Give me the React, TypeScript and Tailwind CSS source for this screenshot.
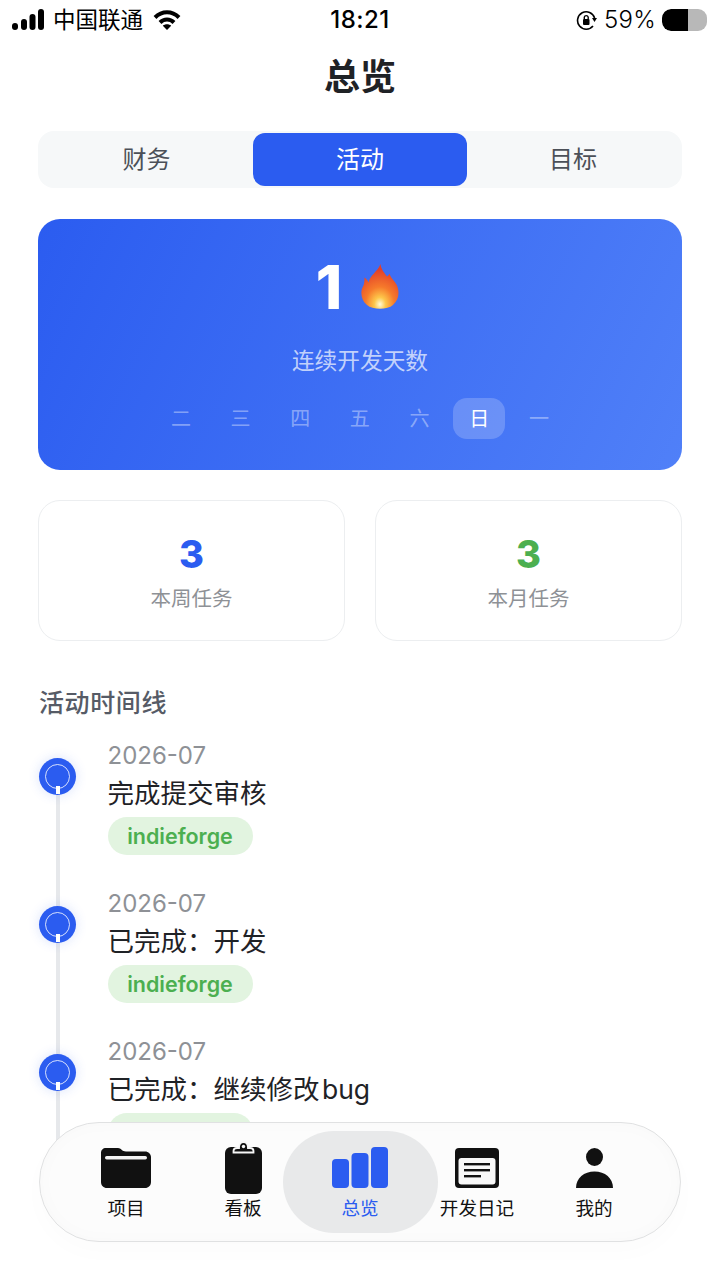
const cjk = "font-['Inter','Noto_Sans_CJK_SC',sans-serif]";

const weekDays = ['二', '三', '四', '五', '六', '日', '一'];

const timeline = [
  { date: '2026-07', title: '完成提交审核' },
  { date: '2026-07', title: '已完成：开发' },
  { date: '2026-07', title: '已完成：继续修改\u200abug' },
];

function StatusBar() {
  return (
    <div className="relative flex h-10 items-center justify-between pl-3 pr-[13px] text-black">
      <div className="flex items-center">
        <svg width="32" height="22" viewBox="0 0 32 22" fill="currentColor">
          <rect x="0" y="14" width="6" height="7" rx="3" />
          <rect x="9" y="10" width="6" height="11" rx="3" />
          <rect x="17.5" y="5" width="6" height="16" rx="3" />
          <rect x="26" y="0" width="6" height="21" rx="3" />
        </svg>
        <span className="ml-[9px] text-[22.5px] leading-none">中国联通</span>
        <svg className="ml-[10px]" width="28" height="22" viewBox="0 0 28 22" fill="none" stroke="currentColor" strokeWidth="4">
          <path d="M2 8.5 C9 1.5 19 1.5 26 8.5" />
          <path d="M7 13.5 C11 9.5 17 9.5 21 13.5" />
          <path d="M14 21 L9.8 16.7 C12 14.7 16 14.7 18.2 16.7 Z" fill="currentColor" stroke="none" />
        </svg>
      </div>
      <span className="absolute left-0 right-0 text-center text-2xl font-medium leading-none tracking-[0.5px]">18:21</span>
      <div className="flex items-center">
        <svg width="21" height="21" viewBox="0 0 21 21" fill="none" stroke="currentColor">
          <path d="M17 16 A8.7 8.7 0 1 1 18.6 8" strokeWidth="1.6" />
          <path d="M16 8 L21 8 L18.5 12 Z" fill="currentColor" stroke="none" />
          <rect x="7" y="9" width="6.5" height="6" rx="1" fill="currentColor" stroke="none" />
          <path d="M8.3 9 V7.2 A2 2 0 0 1 12.2 7.2 V9" strokeWidth="1.4" />
        </svg>
        <span className="ml-[7px] text-2xl font-light leading-none tracking-[0.3px]">59%</span>
        <div className="ml-[6px] flex h-[22px] w-[45px] overflow-hidden rounded-[9px] bg-[#b8b8b8]">
          <div className="w-[26px] rounded-l-[9px] bg-black" />
        </div>
      </div>
    </div>
  );
}

function Tabs() {
  return (
    <div className="mx-[38px] mt-[34px] flex h-[57px] items-center rounded-2xl bg-[#f6f8f9] text-2xl text-[#4b5058]">
      <div className="w-[215px] pl-[2px] text-center">财务</div>
      <div className="flex h-[53px] w-[214px] items-center justify-center rounded-xl bg-[#2b5cf0] text-white">活动</div>
      <div className="w-[215px] pr-[3px] text-center">目标</div>
    </div>
  );
}

function Flame() {
  return (
    <svg width="38" height="46" viewBox="0 0 38 46">
      <defs>
        <radialGradient id="flame" cx="50%" cy="90%" r="78%">
          <stop offset="0%" stopColor="#fffbd6" />
          <stop offset="20%" stopColor="#fdc64a" />
          <stop offset="50%" stopColor="#f67a2b" />
          <stop offset="100%" stopColor="#e23f2a" />
        </radialGradient>
      </defs>
      <path
        d="M19.5 0 C20 5 23 8.5 26 12.5 C27.5 11.5 28 10.5 28.5 9.5 C29.5 14 33 16 35.5 20.5 C39 27.5 38 36 32 41 C26.5 46 11.5 46 6 41 C0 36 -1 27.5 2 22.5 C3 20.5 3.5 18 3.5 13.5 C5 14.5 6.5 16 7.5 18.5 C9 11 16 8.5 19.5 0 Z"
        fill="url(#flame)"
      />
    </svg>
  );
}

function Hero() {
  return (
    <div className="mx-[38px] mt-[31px] flex h-[251px] flex-col items-center rounded-[22px] bg-[linear-gradient(115deg,#2b5cf0,#5080f8)]">
      <div className="mt-[45px] flex h-[46px] items-center pr-[5px]">
        <span className="text-[60px] font-extrabold leading-none text-white">1</span>
        <span className="ml-[19px] flex">
          <Flame />
        </span>
      </div>
      <div className="mt-[35px] text-[22.7px] leading-8 text-white/70">连续开发天数</div>
      <div className="mt-[21px] flex h-[41px] items-center">
        {weekDays.map((d, i) => (
          <div
            key={d}
            className={
              i === 5
                ? 'mx-[4px] flex h-[41px] w-[52px] items-center justify-center rounded-[14px] bg-white/20 text-[20px] text-white'
                : 'flex h-[41px] w-[59.6px] items-center justify-center text-[20px] text-white/40'
            }
          >
            {d}
          </div>
        ))}
      </div>
    </div>
  );
}

function StatCard({ value, label, color }: { value: string; label: string; color: string }) {
  return (
    <div className="flex h-[141px] flex-1 flex-col items-center rounded-[22px] border border-[#eceef0] bg-white">
      <div className={`mt-[30px] text-[38px] font-extrabold leading-[46px] ${color}`}>{value}</div>
      <div className="mt-[8px] text-[20.5px] leading-7 text-[#8e9196]">{label}</div>
    </div>
  );
}

function TimelineItem({ date, title }: { date: string; title: string }) {
  return (
    <div className="flex h-[148px]">
      <div className="relative w-[37px] shrink-0">
        <div className="absolute left-[17px] top-[40px] h-[140px] w-1 bg-[#e6e8eb]" />
        <div className="absolute left-0 top-[18px] flex h-[37px] w-[37px] items-center justify-center rounded-full bg-[#2b5cf0] shadow-[0_0_12px_rgba(43,92,240,0.18)]">
          <div className="h-[25px] w-[25px] rounded-full border border-white/80" />
        </div>
        <div className="absolute left-[17px] top-[46px] h-2 w-1 bg-white" />
      </div>
      <div className="ml-[31.5px]">
        <div className="mt-[1px] text-2xl leading-[30px] text-[#8e9196]">{date}</div>
        <div className="mt-[5px] text-[26.5px] leading-[34px] text-[#1f2226]">{title}</div>
        <div className="mt-[7px] flex h-[38px] w-[145px] items-center justify-center rounded-[19px] bg-[#e2f4e0] text-[21.5px] font-semibold text-[#4caf50]">
          indieforge
        </div>
      </div>
    </div>
  );
}

function NavItem({ label, icon, active }: { label: string; icon: React.ReactNode; active?: boolean }) {
  return (
    <div
      className={
        active
          ? '-mx-[19px] flex h-[102px] w-[155px] flex-col items-center rounded-[51px] bg-[#e8e9ea] text-[#2b5cf0]'
          : 'relative flex h-[102px] w-[117px] flex-col items-center text-[#111111]'
      }
    >
      <div className="flex h-[57px] items-end justify-center">{icon}</div>
      <div className="mt-[8px] whitespace-nowrap text-[18.6px] leading-6">{label}</div>
    </div>
  );
}

function BottomNav() {
  return (
    <div className="absolute left-[39px] top-[1122px] flex h-[120px] w-[642px] items-center justify-center rounded-[60px] border border-[#e0e1e2] bg-[#fcfcfc] shadow-[inset_0_0_20px_rgba(0,0,0,0.02),0_10px_24px_rgba(0,0,0,0.015)]">
      <NavItem
        label="项目"
        icon={
          <svg width="50" height="40" viewBox="0 0 50 40" fill="#111">
            <path d="M5 0 H17 C20 0 21 3.5 25 3.5 H44 C47.5 3.5 50 6 50 9 V34 C50 37.5 47.5 40 44 40 H6 C2.5 40 0 37.5 0 34 V5 C0 2 2 0 5 0 Z" />
            <rect x="4" y="8" width="42" height="3.5" rx="1.7" fill="#f4f4f4" />
          </svg>
        }
      />
      <NavItem
        label="看板"
        icon={
          <svg className="-mb-[6px]" width="37" height="53" viewBox="0 0 37 53" fill="#111">
            <rect x="0" y="6" width="37" height="47" rx="6" />
            <path d="M8.5 10 C8.5 7.5 10 7 12 7 H14 C14 3.5 16 1 18.5 1 C21 1 23 3.5 23 7 H25 C27 7 28.5 7.5 28.5 10 V11.5 H8.5 Z" fill="#111" stroke="#f7f7f7" strokeWidth="1.8" />
            <circle cx="18.5" cy="5.5" r="1.7" fill="#f7f7f7" />
          </svg>
        }
      />
      <NavItem
        active
        label="总览"
        icon={
          <svg width="56" height="41" viewBox="0 0 56 41" fill="#2b5cf0">
            <rect x="0" y="12" width="17" height="29" rx="4" />
            <rect x="19.5" y="6" width="17" height="35" rx="4" />
            <rect x="39" y="0" width="17" height="41" rx="4" />
          </svg>
        }
      />
      <NavItem
        label="开发日记"
        icon={
          <svg width="44" height="40" viewBox="0 0 44 40">
            <rect width="44" height="40" rx="4" fill="#111" />
            <rect x="3.5" y="10" width="37" height="26.5" rx="3" fill="#f8f8f8" />
            <rect x="9" y="15" width="26" height="2.4" fill="#111" />
            <rect x="9" y="21" width="26" height="2.4" fill="#111" />
            <rect x="9" y="27" width="17" height="2.4" fill="#111" />
          </svg>
        }
      />
      <NavItem
        label="我的"
        icon={
          <svg width="37" height="40" viewBox="0 0 37 40" fill="#111">
            <ellipse cx="18.5" cy="9" rx="8.5" ry="9" />
            <path d="M0 40 C0 30 8 23.5 18.5 23.5 C29 23.5 37 30 37 40 Z" />
          </svg>
        }
      />
    </div>
  );
}

export default function App() {
  return (
    <div className={`relative h-[1281px] w-[720px] overflow-hidden bg-white ${cjk}`}>
      <StatusBar />
      <h1 className="mt-[17px] h-[40px] text-center text-[36px] font-bold leading-[40px] text-[#1f2226]">总览</h1>
      <Tabs />
      <Hero />
      <div className="mx-[38px] mt-[30px] flex gap-[30px]">
        <StatCard value="3" label="本周任务" color="text-[#2b5cf0]" />
        <StatCard value="3" label="本月任务" color="text-[#4caf50]" />
      </div>
      <div className="ml-[39px] mt-[46px] text-[25px] font-medium leading-8 tracking-[0.6px] text-[#565b66]">活动时间线</div>
      <div className="ml-[39px] mt-[21px]">
        {timeline.map((item, i) => (
          <TimelineItem key={i} date={item.date} title={item.title} />
        ))}
      </div>
      <BottomNav />
    </div>
  );
}
